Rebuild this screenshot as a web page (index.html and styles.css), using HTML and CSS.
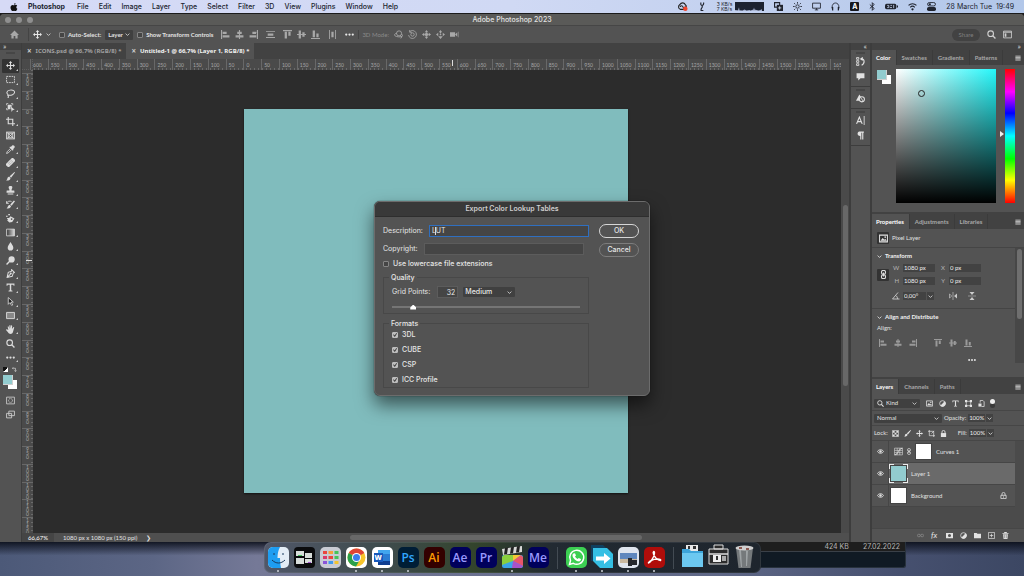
FILE: index.html
```html
<!DOCTYPE html>
<html lang="en">
<head>
    <meta charset="UTF-8">
    <meta name="viewport" content="width=device-width, initial-scale=1.0">
    <title>Adobe Photoshop 2023</title>
    <link rel="stylesheet" href="styles.css">
</head>
<body>
    <!-- Icon sprite -->
    <svg class="sprite" aria-hidden="true">
        <symbol id="apple" viewBox="0 0 16 16"><path fill="currentColor" d="M11 0c.1 1.800-1.400 3.400-3 3.400C7.800 1.700 9.400.2 11 0zM8.200 4.600c.8 0 1.700-.9 3.200-.9 1.200 0 2.200.6 2.900 1.600-2.600 1.500-2.200 5 .5 6C14 13.500 12.700 16 11 16c-1.200 0-1.600-.7-2.900-.7-1.400 0-1.800.7-2.900.7C3 16 1 12 1 9c0-3.300 2-5.200 4.200-5.200 1.300 0 2.300.8 3 .8z"/></symbol>
        <symbol id="chevron" viewBox="0 0 16 16"><path fill="none" stroke="currentColor" stroke-width="2.500" d="M2 5l6 6 6-6"/></symbol>
        <symbol id="home" viewBox="0 0 16 16"><path fill="currentColor" d="M8 1L0 9h2.500v6h4v-4.500h3V15h4V9H16z"/></symbol>
        <symbol id="move" viewBox="0 0 16 16"><path fill="currentColor" d="M8 0l3 3.500H9V7h3.500V5L16 8l-3.500 3V9H9v3.500h2L8 16l-3-3.500h2V9H3.500v2L0 8l3.500-3v2H7V3.500H5z"/></symbol>
        <symbol id="al-left" viewBox="0 0 16 16"><path fill="currentColor" d="M0 0h2v16H0zM3 3h7v4H3zM3 9.500h12v4H3z"/></symbol>
        <symbol id="al-hc" viewBox="0 0 16 16"><path fill="currentColor" d="M7 0h2v3h3v4H9v2.500h6v4H9V16H7v-2.500H1v-4h6V7H4V3h3z"/></symbol>
        <symbol id="al-right" viewBox="0 0 16 16"><path fill="currentColor" d="M14 0h2v16h-2zM6 3h7v4H6zM1 9.500h12v4H1z"/></symbol>
        <symbol id="al-top" viewBox="0 0 16 16"><path fill="currentColor" d="M0 0h16v2H0zM3 3h4v12H3zM9.500 3h4v7h-4z"/></symbol>
        <symbol id="al-vc" viewBox="0 0 16 16"><path fill="currentColor" d="M0 7h3V1h4v6h2.500V4h4v3H16v2h-2.500v3h-4V9H7v6H3V9H0z"/></symbol>
        <symbol id="al-bottom" viewBox="0 0 16 16"><path fill="currentColor" d="M0 14h16v2H0zM3 1h4v12H3zM9.500 6h4v7h-4z"/></symbol>
        <symbol id="dist-v" viewBox="0 0 16 16"><path fill="currentColor" d="M0 2h16v1.500H0zM3 6h10v4H3zM0 12.500h16V14H0z"/></symbol>
        <symbol id="dist-h" viewBox="0 0 16 16"><path fill="currentColor" d="M2 0h1.500v16H2zM6 3h4v10H6zM12.500 0H14v16h-1.500z"/></symbol>
        <symbol id="dots" viewBox="0 0 16 16"><g fill="currentColor"><circle cx="2.200" cy="8" r="2"/><circle cx="8" cy="8" r="2"/><circle cx="13.800" cy="8" r="2"/></g></symbol>
        <symbol id="orbit" viewBox="0 0 16 16"><g fill="none" stroke="currentColor" stroke-width="1.500"><circle cx="9" cy="6" r="4.500"/><path d="M5 6C1 6 0 9 2 10.500s9 2.500 12 1 1-4-1-4M11 10l3 2-2 3"/></g></symbol>
        <symbol id="roll" viewBox="0 0 16 16"><g fill="none" stroke="currentColor" stroke-width="1.500"><circle cx="8" cy="8" r="3"/><path d="M3 3a7 7 0 1 1-2 6M3 0v4h4"/></g></symbol>
        <symbol id="pan" viewBox="0 0 16 16"><path fill="currentColor" d="M8 0l3 4H5zM8 16l3-4H5zM0 8l4-3v6zM16 8l-4-3v6zM8 4l4 4-4 4-4-4z"/></symbol>
        <symbol id="slide" viewBox="0 0 16 16"><path fill="currentColor" d="M8 0l3 4H9v2H7V4H5zM8 16l4-5H4zM0 8l4-3v6zM16 8l-4-3v6z"/><circle cx="8" cy="8" r="1.500" fill="currentColor"/></symbol>
        <symbol id="camera" viewBox="0 0 16 16"><path fill="currentColor" d="M0 4h9v8H0zM9 8l4-4v8z"/><path stroke="currentColor" d="M15.500 3v10"/></symbol>
        <symbol id="search" viewBox="0 0 16 16"><circle cx="6.500" cy="6.500" r="5" fill="none" stroke="currentColor" stroke-width="2"/><path stroke="currentColor" stroke-width="2.500" d="M10 10l5 5"/></symbol>
        <symbol id="layout" viewBox="0 0 16 16"><path fill="none" stroke="currentColor" stroke-width="1.500" d="M1 2h14v12H1zM1 4h14"/><path fill="currentColor" d="M3 6h3v6H3z"/></symbol>
        <symbol id="burger" viewBox="0 0 16 16"><path stroke="currentColor" stroke-width="2" d="M1 3h14M1 6.500h14M1 10h14M1 13.500h14"/></symbol>
        <symbol id="marquee" viewBox="0 0 16 16"><path fill="none" stroke="currentColor" stroke-width="1.600" stroke-dasharray="3 1.500" d="M1 2.500h14v11H1z"/></symbol>
        <symbol id="lasso" viewBox="0 0 16 16"><path fill="none" stroke="currentColor" stroke-width="1.800" d="M4 10C0 8 1 3 7 2s9 2 8 5-7 5-10 4-2 0-1 2 0 2-1 3"/></symbol>
        <symbol id="objsel" viewBox="0 0 16 16"><path fill="none" stroke="currentColor" stroke-width="1.300" d="M1 4V1h3m5 0h3v3M1 9v3h3"/><path fill="currentColor" d="M3 3h7v4l-2-1v5H3zM8.500 6l7 6-3.500.5L10 16z"/></symbol>
        <symbol id="crop" viewBox="0 0 16 16"><path fill="none" stroke="currentColor" stroke-width="2" d="M4 0v12h12M0 4h12v12"/></symbol>
        <symbol id="frame" viewBox="0 0 16 16"><path fill="none" stroke="currentColor" stroke-width="1.600" d="M1 2h14v12H1zM1 2l14 12M15 2L1 14M4 4h8v8H4z"/></symbol>
        <symbol id="eyedrop" viewBox="0 0 16 16"><path fill="currentColor" d="M11 1c2-2 6 1 4 4l-2.500 2.500 1 1-1.500 1.500-6-6L7.500 2.500l1 1z"/><path fill="none" stroke="currentColor" stroke-width="1.500" d="M8 6l-6 6-1 3 3-1 6-6"/></symbol>
        <symbol id="heal" viewBox="0 0 16 16"><g transform="rotate(-45 8 8)"><rect x="-1" y="4" width="18" height="8" rx="3" fill="currentColor"/><path stroke="#535353" stroke-dasharray="1 1" d="M4.500 4v8M11.500 4v8M6 6.500h4M6 9.500h4"/></g></symbol>
        <symbol id="brush" viewBox="0 0 16 16"><path fill="currentColor" d="M15 0l1 1-7 9-2.500-2.500zM6 8.500L8 10.500c0 4-4 5-8 4.500 2-1 2-2 2.500-4S5 8.500 6 8.500z"/></symbol>
        <symbol id="stamp" viewBox="0 0 16 16"><path fill="currentColor" d="M8 0c4 0 4 3 2 6v2h4c1 0 1 1 1 4H1c0-3 0-4 1-4h4V6C4 3 4 0 8 0zM3 13.500h10V15H3z"/></symbol>
        <symbol id="history" viewBox="0 0 16 16"><path fill="currentColor" d="M14 1l2 1-6 8-2.500-2zM7 9l2 2c-1 4-5 4-8 4 3-2 2-6 6-6z"/><path fill="none" stroke="currentColor" stroke-width="1.500" d="M1 2v4h4M1 6c1-4 6-5 9-3"/></symbol>
        <symbol id="eraser" viewBox="0 0 16 16"><path fill="currentColor" d="M8 4l7 4-4 6-5 1-4-4zM0 3h3v2H0zM4 0h3v2H4zM2 7h3v2H2z"/><circle cx="10" cy="9" r="1.500" fill="#535353"/></symbol>
        <symbol id="gradient" viewBox="0 0 16 16"><defs><linearGradient id="gr"><stop stop-color="#333"/><stop offset="1" stop-color="#ddd"/></linearGradient></defs><path fill="url(#gr)" stroke="currentColor" stroke-width="1.400" d="M1 2h14v12H1z"/></symbol>
        <symbol id="drop" viewBox="0 0 16 16"><path fill="currentColor" d="M8 0c2 4 5 7 5 10a5 5 0 0 1-10 0c0-3 3-6 5-10z"/></symbol>
        <symbol id="dodge" viewBox="0 0 16 16"><circle cx="10" cy="6" r="5.500" fill="currentColor"/><path stroke="currentColor" stroke-width="2.500" d="M7 9l-6 6"/></symbol>
        <symbol id="pen" viewBox="0 0 16 16"><path fill="none" stroke="currentColor" stroke-width="1.800" d="M10 1l5 5-2 1-2 6-9 2 2-9 6-2zM2 15l6-6"/><circle cx="8.500" cy="8" r="1.800" fill="currentColor"/></symbol>
        <symbol id="type" viewBox="0 0 16 16"><path fill="currentColor" d="M1 1h14v4h-1.500L13 3H9.300v10l2.200.8V15h-7v-1.200l2.200-.8V3H3l-.5 2H1z"/></symbol>
        <symbol id="arrow" viewBox="0 0 16 16"><path fill="#222" stroke="currentColor" stroke-width="1.500" d="M4 1v12l3-3 3 5 2-1-3-5h4z"/></symbol>
        <symbol id="rect" viewBox="0 0 16 16"><path fill="#888" stroke="currentColor" stroke-width="1.600" d="M1 2.500h14v11H1z"/></symbol>
        <symbol id="hand" viewBox="0 0 16 16"><path fill="currentColor" d="M4 8L3 3.500c0-1.500 1.500-1.500 2 0L6 7V1.500c0-2 2-2 2 0V6l1-4.500c.5-1.500 2-1 2 .5L10.500 7 13 4c1-1 2 0 1.500 1L12.500 12c-1 5-7 5-9 1L0 9c0-2 2-2 4 0z"/></symbol>
        <symbol id="swap" viewBox="0 0 16 16"><path fill="none" stroke="currentColor" stroke-width="2" d="M4 1L1 4l3 3M2 4h9v9M8 11l3 4 4-4"/></symbol>
        <symbol id="mask" viewBox="0 0 16 16"><path fill="none" stroke="currentColor" stroke-width="1.500" d="M1 2h14v12H1z"/><circle cx="8" cy="8" r="3.500" fill="none" stroke="currentColor" stroke-width="1.500" stroke-dasharray="2 1"/></symbol>
        <symbol id="screens" viewBox="0 0 16 16"><path fill="#535353" stroke="currentColor" stroke-width="1.600" d="M5 2h10v8H5zM1 6h9v8H1z"/></symbol>
        <symbol id="hist2" viewBox="0 0 16 16"><path fill="none" stroke="currentColor" stroke-width="1.500" d="M1 1h4v3H1zM1 6.500h4v3H1zM1 12h4v3H1z"/><path fill="none" stroke="currentColor" stroke-width="2" d="M12 1L8.500 3.500 12 6M9 3.500c7-1 7 8 1 11"/></symbol>
        <symbol id="bubble" viewBox="0 0 16 16"><path fill="currentColor" d="M1 2h14v9H8l-4 4v-4H1z"/></symbol>
        <symbol id="shapes" viewBox="0 0 16 16"><path fill="currentColor" d="M6 1l4 6-2 5H0z"/><circle cx="10.500" cy="9.500" r="4.500" fill="#535353" stroke="currentColor" stroke-width="1.800"/><path fill="none" stroke="currentColor" stroke-width="1.500" d="M8 6l5 7"/></symbol>
        <symbol id="char" viewBox="0 0 16 16"><path fill="none" stroke="currentColor" stroke-width="2" d="M1 14L6 2l5 12M3 10h6"/><path stroke="currentColor" stroke-width="1.500" d="M14.500 0v16"/></symbol>
        <symbol id="para" viewBox="0 0 16 16"><path fill="currentColor" d="M6 1h8v2h-1v12h-2V3H9.500v12h-2V9C1 9 2 1 6 1z"/></symbol>
        <symbol id="picture" viewBox="0 0 16 16"><path fill="none" stroke="currentColor" stroke-width="1.800" d="M1 2h14v12H1z"/><path fill="currentColor" d="M2.500 12l4-5 3 3 1.500-1.500 3 3.500z"/><circle cx="11" cy="5.500" r="1.500" fill="currentColor"/></symbol>
        <symbol id="chain" viewBox="3 0 10 16"><g fill="none" stroke="currentColor" stroke-width="2"><rect x="4.500" y="0.800" width="7" height="6.500" rx="2.500"/><rect x="4.500" y="8.700" width="7" height="6.500" rx="2.500"/><path d="M8 4.500v7"/></g></symbol>
        <symbol id="angle" viewBox="0 0 16 16"><path fill="none" stroke="currentColor" stroke-width="1.800" d="M12 1L1 14h14M7 7c3 1 4 4 4 7"/></symbol>
        <symbol id="flip-h" viewBox="0 0 16 16"><path fill="currentColor" d="M7.400 0h1.200v16H7.400zM16 3v10l-6-5z"/><path fill="none" stroke="currentColor" stroke-width="1.300" d="M1 4v8l4.500-4z"/></symbol>
        <symbol id="flip-v" viewBox="0 0 16 16"><path fill="currentColor" d="M0 7.400h16v1.200H0zM3 0h10L8 6zM3 16h10l-5-6z"/></symbol>
        <symbol id="adjust" viewBox="0 0 16 16"><circle cx="8" cy="8" r="6.500" fill="none" stroke="currentColor" stroke-width="1.800"/><path fill="currentColor" d="M13 3A7 7 0 0 1 3 13z"/></symbol>
        <symbol id="shape" viewBox="0 0 16 16"><path fill="none" stroke="currentColor" stroke-width="1.500" d="M3 3h10v10H3z"/><path fill="currentColor" d="M0 0h5v5H0zM11 0h5v5h-5zM0 11h5v5H0zM11 11h5v5h-5z"/></symbol>
        <symbol id="smart" viewBox="0 0 16 16"><path fill="none" stroke="currentColor" stroke-width="1.800" d="M5 6V1h6l3 3v11H8"/><path fill="currentColor" d="M1 8h7v7H1z"/></symbol>
        <symbol id="checker" viewBox="0 0 16 16"><path fill="none" stroke="currentColor" stroke-width="1.500" d="M1 1h14v14H1z"/><path fill="currentColor" d="M2 2h4v4H2zM10 2h4v4h-4zM6 6h4v4H6zM2 10h4v4H2zM10 10h4v4h-4z"/></symbol>
        <symbol id="artboard" viewBox="0 0 16 16"><path fill="none" stroke="currentColor" stroke-width="1.600" d="M3 0v13h13M0 3h13v13M8 8l6-6"/></symbol>
        <symbol id="lock" viewBox="0 0 16 16"><path fill="none" stroke="currentColor" stroke-width="2" d="M4.500 8V4.500a3.500 3.500 0 0 1 7 0V8"/><path fill="currentColor" d="M2 7h12v9H2z"/></symbol>
        <symbol id="lock-o" viewBox="0 0 16 16"><path fill="none" stroke="currentColor" stroke-width="1.800" d="M4.500 8V4.500a3.500 3.500 0 0 1 7 0V8M2 7.500h12v7.500H2zM8 10v3"/></symbol>
        <symbol id="eye" viewBox="0 0 16 16"><path fill="none" stroke="currentColor" stroke-width="2" d="M1 8c3.500-5.500 10.500-5.500 14 0-3.500 5.500-10.500 5.500-14 0z"/><circle cx="8" cy="8" r="2.800" fill="currentColor"/></symbol>
        <symbol id="curves" viewBox="0 0 16 16"><path fill="none" stroke="currentColor" stroke-width="1" d="M1 2h14v12H1zM1 6h14M1 10h14M5.700 2v12M10.300 2v12"/><path fill="none" stroke="currentColor" stroke-width="1.500" d="M1 14C9 13 6 4 15 2"/></symbol>
        <symbol id="links" viewBox="0 0 16 16"><g fill="none" stroke="currentColor" stroke-width="1.800"><rect x="1" y="5" width="6.500" height="6" rx="3"/><rect x="8.500" y="5" width="6.500" height="6" rx="3"/></g></symbol>
        <symbol id="addmask" viewBox="0 0 16 16"><path fill="currentColor" fill-rule="evenodd" d="M0 2h16v12H0zM8 4.500a3.500 3.500 0 1 0 0 7 3.500 3.500 0 0 0 0-7z"/></symbol>
        <symbol id="folder" viewBox="0 0 16 16"><path fill="currentColor" d="M0 2h6l2 2h8v10H0z"/></symbol>
        <symbol id="plus" viewBox="0 0 16 16"><path fill="none" stroke="currentColor" stroke-width="1.600" d="M1 1h14v14H1zM8 4v8M4 8h8"/></symbol>
        <symbol id="trash" viewBox="0 0 16 16"><path fill="currentColor" d="M1 2h4V0h6v2h4v2H1zM2.500 5h11l-1 11h-9z"/><path stroke="#535353" d="M6 6v8M10 6v8"/></symbol>
        <symbol id="cloud" viewBox="0 0 18 16"><path fill="none" stroke="#222" stroke-width="2" d="M5 13a4.500 4.500 0 0 1-1-8c3-5 9-4 10 0 3 2 2 8-2 8zM5 9c0-3 4-3 5 0s4 3 4-1"/><circle cx="14" cy="12" r="4" fill="#f0462e"/></symbol>
        <symbol id="plug" viewBox="0 0 16 16"><path fill="none" stroke="currentColor" stroke-width="2" d="M5 1v3c0 3 5 2 5-1V1M7.500 5v4c0 2-2 2-2 4v2h4"/></symbol>
        <symbol id="copies" viewBox="0 0 16 16"><path fill="none" stroke="currentColor" stroke-width="2" d="M1 1h9v8H1z"/><path fill="currentColor" d="M5 5h11v11H5z"/><path stroke="#d5dff2" stroke-width="1.500" d="M7 10.500h6M10 7.500v6"/></symbol>
        <symbol id="sun" viewBox="0 0 16 16"><circle cx="8" cy="8" r="3" fill="none" stroke="currentColor" stroke-width="1.500"/><path stroke="currentColor" stroke-width="1.500" d="M8 0v3M8 13v3M0 8h3M13 8h3M2 2l2 2M12 12l2 2M14 2l-2 2M4 12l-2 2"/></symbol>
        <symbol id="display" viewBox="0 0 16 16"><path fill="none" stroke="currentColor" stroke-width="1.500" d="M1 2h14v9H1zM5 14h6M8 11v3"/></symbol>
        <symbol id="phones" viewBox="0 0 16 16"><path fill="none" stroke="currentColor" stroke-width="1.500" d="M2 10c-1-11 13-11 12 0"/><path fill="currentColor" d="M1 9h3v6H2zM15 9h-3v6h2z"/></symbol>
        <symbol id="bt" viewBox="2 0 11 16"><path fill="none" stroke="currentColor" stroke-width="1.700" d="M3.500 4.500l8 7L8 15V1l3.500 3.500-8 7"/></symbol>
        <symbol id="battery" viewBox="0 0 24 16"><rect x="0" y="3" width="21" height="10" rx="3" fill="currentColor"/><path fill="currentColor" d="M22 6h2v4h-2z"/><path stroke="#c3d0ec" stroke-width="1.500" fill="none" d="M4 6h3v4H4M10 6h3M9 10h4M16 5v6"/></symbol>
        <symbol id="wifi" viewBox="0 0 16 16"><path fill="none" stroke="currentColor" stroke-width="2" d="M1 6c4-4 10-4 14 0M4 9.500c2.500-2.500 5.500-2.500 8 0"/><circle cx="8" cy="13" r="2" fill="currentColor"/></symbol>
        <symbol id="switches" viewBox="0 0 16 16"><rect x="1" y="1" width="14" height="6" rx="3" fill="none" stroke="currentColor" stroke-width="1.600"/><circle cx="5" cy="4" r="2" fill="currentColor"/><rect x="0" y="9" width="16" height="7" rx="3" fill="currentColor"/></symbol>
    </svg>

    <header class="menubar">
        <nav class="menus">
            <svg class="icon apple"><use href="#apple"/></svg>
            <button class="app-name">Photoshop</button>
            <button>File</button>
            <button>Edit</button>
            <button>Image</button>
            <button>Layer</button>
            <button>Type</button>
            <button>Select</button>
            <button>Filter</button>
            <button>3D</button>
            <button>View</button>
            <button>Plugins</button>
            <button>Window</button>
            <button>Help</button>
        </nav>
        <div class="status-icons">
            <svg class="icon wide"><use href="#cloud"/></svg>
            <svg class="icon"><use href="#plug"/></svg>
            <div class="net">
                <div class="net-text"><span>3 KB/s</span><span>7 KB/s</span></div>
                <svg class="net-graph" viewBox="0 0 29 9" preserveAspectRatio="none"><path fill="#1c2230" d="M0 0h29v9H0z"/><path fill="#aab6d4" d="M0 9V8l3 .3 1-3 .5 3 3 .2 2-1 2 1 3-.5 1 .5 3-1 .5-2 .5 2 4 1 2-.5 1-1 .5 1.500V9z"/></svg>
            </div>
            <svg class="icon"><use href="#copies"/></svg>
            <svg class="icon"><use href="#sun"/></svg>
            <svg class="icon"><use href="#display"/></svg>
            <svg class="icon"><use href="#phones"/></svg>
            <span class="input-lang">A</span>
            <svg class="icon bluetooth"><use href="#bt"/></svg>
            <svg class="icon battery"><use href="#battery"/></svg>
            <svg class="icon"><use href="#wifi"/></svg>
            <svg class="icon"><use href="#switches"/></svg>
            <time>28 March Tue&nbsp; 19:49</time>
        </div>
    </header>

    <main class="app">
        <div class="titlebar">
            <div class="lights"><i></i><i></i><i></i></div>
            <h1>Adobe Photoshop 2023</h1>
        </div>

        <div class="options">
            <button class="home" aria-label="Home"><svg class="icon"><use href="#home"/></svg></button>
            <button class="tool-pick" aria-label="Move tool"><svg class="icon"><use href="#move"/></svg><svg class="chev"><use href="#chevron"/></svg></button>
            <label class="check"><input type="checkbox"> Auto-Select:</label>
            <div class="select auto-target">
                <select aria-label="Auto-select target"><option>Layer</option></select>
                <svg class="chev"><use href="#chevron"/></svg>
            </div>
            <label class="check transform-check"><input type="checkbox"> Show Transform Controls</label>
            <div class="icon-group">
                <svg class="icon"><use href="#al-left"/></svg>
                <svg class="icon"><use href="#al-hc"/></svg>
                <svg class="icon"><use href="#al-right"/></svg>
            </div>
            <div class="icon-group"><svg class="icon"><use href="#dist-v"/></svg></div>
            <div class="icon-group">
                <svg class="icon"><use href="#al-top"/></svg>
                <svg class="icon"><use href="#al-vc"/></svg>
                <svg class="icon"><use href="#al-bottom"/></svg>
            </div>
            <div class="icon-group"><svg class="icon"><use href="#dist-h"/></svg></div>
            <div class="icon-group more"><svg class="icon"><use href="#dots"/></svg></div>
            <div class="mode-3d">
                <span>3D Mode:</span>
                <svg class="icon"><use href="#orbit"/></svg>
                <svg class="icon"><use href="#roll"/></svg>
                <svg class="icon"><use href="#pan"/></svg>
                <svg class="icon"><use href="#slide"/></svg>
                <svg class="icon"><use href="#camera"/></svg>
            </div>
            <div class="options-end">
                <button class="share">Share</button>
                <svg class="icon"><use href="#search"/></svg>
                <svg class="icon"><use href="#layout"/></svg>
            </div>
        </div>

        <div class="workspace">
            <aside class="toolbar">
                <div class="collapse">»</div>
                <div class="grip"></div>
                <div class="tools">
                    <button class="active" aria-label="Move"><svg class="icon"><use href="#move"/></svg></button>
                    <button aria-label="Marquee"><svg class="icon"><use href="#marquee"/></svg></button>
                    <button aria-label="Lasso"><svg class="icon"><use href="#lasso"/></svg></button>
                    <button aria-label="Object selection"><svg class="icon"><use href="#objsel"/></svg></button>
                    <button aria-label="Crop"><svg class="icon"><use href="#crop"/></svg></button>
                    <button class="single" aria-label="Frame"><svg class="icon"><use href="#frame"/></svg></button>
                    <button aria-label="Eyedropper"><svg class="icon"><use href="#eyedrop"/></svg></button>
                    <button aria-label="Healing brush"><svg class="icon"><use href="#heal"/></svg></button>
                    <button aria-label="Brush"><svg class="icon"><use href="#brush"/></svg></button>
                    <button aria-label="Clone stamp"><svg class="icon"><use href="#stamp"/></svg></button>
                    <button aria-label="History brush"><svg class="icon"><use href="#history"/></svg></button>
                    <button aria-label="Eraser"><svg class="icon"><use href="#eraser"/></svg></button>
                    <button aria-label="Gradient"><svg class="icon"><use href="#gradient"/></svg></button>
                    <button aria-label="Blur"><svg class="icon"><use href="#drop"/></svg></button>
                    <button aria-label="Dodge"><svg class="icon"><use href="#dodge"/></svg></button>
                    <button aria-label="Pen"><svg class="icon"><use href="#pen"/></svg></button>
                    <button aria-label="Type"><svg class="icon"><use href="#type"/></svg></button>
                    <button aria-label="Path selection"><svg class="icon"><use href="#arrow"/></svg></button>
                    <button aria-label="Rectangle"><svg class="icon"><use href="#rect"/></svg></button>
                    <button aria-label="Hand"><svg class="icon"><use href="#hand"/></svg></button>
                    <button class="single" aria-label="Zoom"><svg class="icon"><use href="#search"/></svg></button>
                    <button aria-label="Edit toolbar"><svg class="icon"><use href="#dots"/></svg></button>
                </div>
                <div class="swatch-tools">
                    <span class="mini-swatches"></span>
                    <svg class="chev"><use href="#swap"/></svg>
                </div>
                <div class="swatches"></div>
                <div class="modes">
                    <svg class="icon"><use href="#mask"/></svg>
                    <svg class="icon"><use href="#screens"/></svg>
                </div>
            </aside>

            <section class="document">
                <div class="doc-tabs">
                    <button class="doc-tab"><span>×</span>ICONS.psd @ 66,7% (RGB/8) *</button>
                    <button class="doc-tab active"><span>×</span>Untitled-1 @ 66,7% (Layer 1, RGB/8) *</button>
                </div>
                <div class="doc-view">
                    <div class="ruler-corner"></div>
                    <div class="ruler-h"><div class="ticks" id="ruler-h"></div><i class="mark"></i></div>
                    <div class="ruler-end"></div>
                    <div class="ruler-v"><div class="ticks" id="ruler-v"></div><i class="mark"></i></div>
                    <div class="canvas"><div class="artboard"></div></div>
                    <div class="scroll-v"><i></i></div>
                </div>
                <div class="doc-status">
                    <span class="zoom">66,67%</span>
                    <span class="info">1080 px x 1080 px (150 ppi)</span>
                    <span class="next">❯</span>
                    <div class="scroll-h"><i></i></div>
                </div>
            </section>

            <aside class="strip">
                <div class="collapse">«</div>
                <div class="strip-group">
                    <div class="grip"></div>
                    <svg class="icon"><use href="#hist2"/></svg>
                    <svg class="icon"><use href="#bubble"/></svg>
                </div>
                <div class="strip-group">
                    <div class="grip"></div>
                    <svg class="icon"><use href="#shapes"/></svg>
                </div>
                <div class="strip-group">
                    <div class="grip"></div>
                    <svg class="icon"><use href="#char"/></svg>
                    <svg class="icon"><use href="#para"/></svg>
                </div>
                <div class="strip-rest"></div>
            </aside>

            <aside class="panels">
                <div class="collapse">»</div>

                <section class="panel color-panel">
                    <div class="panel-tabs">
                        <button class="active">Color</button>
                        <button>Swatches</button>
                        <button>Gradients</button>
                        <button>Patterns</button>
                        <svg class="burger"><use href="#burger"/></svg>
                    </div>
                    <div class="color-body">
                        <div class="swatches"></div>
                        <div class="spectrum"><i></i></div>
                        <div class="hue"><i></i></div>
                    </div>
                </section>

                <section class="panel props-panel">
                    <div class="panel-tabs">
                        <button class="active">Properties</button>
                        <button>Adjustments</button>
                        <button>Libraries</button>
                        <svg class="burger"><use href="#burger"/></svg>
                    </div>
                    <div class="layer-kind"><span class="dark-box"><svg class="icon"><use href="#picture"/></svg></span>Pixel Layer</div>
                    <div class="props-scroll">
                        <div class="props-main">
                            <div class="props-section">
                                <h2><svg class="chev"><use href="#chevron"/></svg>Transform</h2>
                                <div class="transform-grid">
                                    <span class="dark-box link"><svg class="icon"><use href="#chain"/></svg></span>
                                    <label for="w">W</label><input type="text" id="w" value="1080 px">
                                    <label for="x">X</label><input type="text" id="x" value="0 px">
                                    <label for="h">H</label><input type="text" id="h" value="1080 px">
                                    <label for="y">Y</label><input type="text" id="y" value="0 px">
                                </div>
                                <div class="angle-row">
                                    <label for="angle-in"><svg class="icon"><use href="#angle"/></svg></label>
                                    <div class="combo"><input type="text" id="angle-in" value="0,00°"><button aria-label="Angle presets"><svg class="chev"><use href="#chevron"/></svg></button></div>
                                    <svg class="icon"><use href="#flip-h"/></svg>
                                    <svg class="icon"><use href="#flip-v"/></svg>
                                </div>
                            </div>
                            <div class="props-section align">
                                <h2><svg class="chev"><use href="#chevron"/></svg>Align and Distribute</h2>
                                <p>Align:</p>
                                <div class="align-icons">
                                    <svg class="icon"><use href="#al-left"/></svg>
                                    <svg class="icon"><use href="#al-hc"/></svg>
                                    <svg class="icon"><use href="#al-right"/></svg>
                                    <svg class="icon gap"><use href="#al-top"/></svg>
                                    <svg class="icon"><use href="#al-vc"/></svg>
                                    <svg class="icon"><use href="#al-bottom"/></svg>
                                </div>
                                <svg class="icon align-more"><use href="#dots"/></svg>
                            </div>
                        </div>
                        <div class="props-bar"><i></i></div>
                    </div>
                </section>

                <section class="panel layers-panel">
                    <div class="panel-tabs">
                        <button class="active">Layers</button>
                        <button>Channels</button>
                        <button>Paths</button>
                        <svg class="burger"><use href="#burger"/></svg>
                    </div>
                    <div class="layer-row filter-row">
                        <div class="select kind">
                            <svg class="icon"><use href="#search"/></svg>
                            <select aria-label="Filter"><option>Kind</option></select>
                            <svg class="chev"><use href="#chevron"/></svg>
                        </div>
                        <div class="filter-icons">
                            <svg class="icon"><use href="#picture"/></svg>
                            <svg class="icon"><use href="#adjust"/></svg>
                            <svg class="icon"><use href="#type"/></svg>
                            <svg class="icon"><use href="#shape"/></svg>
                            <svg class="icon"><use href="#smart"/></svg>
                        </div>
                        <span class="toggle"></span>
                    </div>
                    <div class="layer-row">
                        <div class="select blend">
                            <select aria-label="Blend mode"><option>Normal</option></select>
                            <svg class="chev"><use href="#chevron"/></svg>
                        </div>
                        <label for="opacity">Opacity:</label>
                        <div class="combo"><input type="text" id="opacity" value="100%"><button aria-label="Opacity slider"><svg class="chev"><use href="#chevron"/></svg></button></div>
                    </div>
                    <div class="layer-row">
                        <span>Lock:</span>
                        <div class="lock-icons">
                            <svg class="icon"><use href="#checker"/></svg>
                            <svg class="icon"><use href="#brush"/></svg>
                            <svg class="icon"><use href="#move"/></svg>
                            <svg class="icon"><use href="#artboard"/></svg>
                            <svg class="icon"><use href="#lock"/></svg>
                        </div>
                        <label for="fill">Fill:</label>
                        <div class="combo"><input type="text" id="fill" value="100%"><button aria-label="Fill slider"><svg class="chev"><use href="#chevron"/></svg></button></div>
                    </div>
                    <div class="layer-area">
                        <ul class="layer-list">
                            <li>
                                <span class="eye"><svg class="icon"><use href="#eye"/></svg></span>
                                <svg class="icon adj"><use href="#curves"/></svg>
                                <svg class="icon linked"><use href="#chain"/></svg>
                                <span class="thumb"></span>Curves 1
                            </li>
                            <li class="selected">
                                <span class="eye"><svg class="icon"><use href="#eye"/></svg></span>
                                <span class="thumb teal"></span>Layer 1
                            </li>
                            <li>
                                <span class="eye"><svg class="icon"><use href="#eye"/></svg></span>
                                <span class="thumb"></span>Background
                                <svg class="icon locked"><use href="#lock-o"/></svg>
                            </li>
                        </ul>
                    </div>
                    <div class="layer-actions">
                        <svg class="icon off"><use href="#links"/></svg>
                        <span class="fx">fx</span>
                        <svg class="icon"><use href="#addmask"/></svg>
                        <svg class="icon"><use href="#adjust"/></svg>
                        <svg class="icon"><use href="#folder"/></svg>
                        <svg class="icon"><use href="#plus"/></svg>
                        <svg class="icon"><use href="#trash"/></svg>
                    </div>
                </section>
            </aside>
        </div>
    </main>

    <footer class="desktop">
        <div class="back-window">
            <div class="file-row"><span>424 KB</span><span>27.02.2022</span></div>
        </div>
        <nav class="dock">
            <a class="tile running" href="#" aria-label="Finder"><svg viewBox="0 0 21 21"><rect width="21" height="21" rx="5" fill="#e4edf6"/><path fill="#1e9df1" d="M5 0h7c-2 4-2.500 7-2.500 11H12c0 4 .5 7 1 10H5a5 5 0 0 1-5-5V5a5 5 0 0 1 5-5z"/><path fill="none" stroke="#18385c" d="M6 6v2M15 6v2M4 13c4 4 9 4 13 0"/></svg></a>
            <a class="tile" href="#" aria-label="Mission Control"><svg viewBox="0 0 21 21"><rect width="21" height="21" rx="4" fill="#0b0c0e"/><path fill="#d8dedb" d="M2 4h8v5H2zM11 6h7v5h-7zM2 11h8v6H2zM11 12h7v4h-7z"/><path fill="#3fc35a" d="M4 8h4v1H4z"/><path fill="#a44fd0" d="M14 15h3v1h-3z"/></svg></a>
            <a class="tile" href="#" aria-label="Launchpad"><svg viewBox="0 0 21 21"><rect width="21" height="21" rx="5" fill="#c9ccd4"/><path fill="#e9473f" d="M3 4h4v3H3zM8.500 9H13v3H8.500z"/><path fill="#f6a13a" d="M8.500 4H13v3H8.500z"/><path fill="#46c35c" d="M14.500 4h4v3h-4zM14.500 9h4v3h-4z"/><path fill="#d93a6a" d="M3 9h4v3H3z"/><path fill="#8a55d8" d="M3 14h4v3H3z"/><path fill="#3f9af0" d="M8.500 14H13v3H8.500z"/><path fill="#f2c530" d="M14.500 14h4v3h-4z"/></svg></a>
            <a class="tile running" href="#" aria-label="Chrome"><svg viewBox="0 0 21 21"><rect width="21" height="21" rx="5" fill="#fff"/><circle cx="10.500" cy="10.500" r="9" fill="#f7c52c"/><path fill="#de4436" d="M10.500 10.500L2.700 6a9 9 0 0 1 15.600 0z"/><path fill="#2ba14b" d="M10.500 10.500L2.700 6a9 9 0 0 0 7.300 13.500l4-7z"/><circle cx="10.500" cy="10.500" r="4.500" fill="#fff"/><circle cx="10.500" cy="10.500" r="3.500" fill="#3b7ded"/></svg></a>
            <a class="tile running word" href="#" aria-label="Word"><svg viewBox="0 0 21 21"><rect width="21" height="21" rx="5" fill="#fff"/><path fill="#2b7cd3" d="M6 3h12v15H6z"/><path fill="#41a5ee" d="M6 3h12v4H6z"/><path fill="#103f91" d="M6 14h12v4H6z"/><path fill="#185abd" d="M2 6h9v9H2z"/></svg><b>W</b></a>
            <a class="tile running ps" href="#">Ps</a>
            <a class="tile ai" href="#">Ai</a>
            <a class="tile ae" href="#">Ae</a>
            <a class="tile pr" href="#">Pr</a>
            <a class="tile running" href="#" aria-label="Final Cut Pro"><svg viewBox="0 0 21 21"><path fill="#d8d8d8" d="M0 2l20-3v6L1 8z"/><path fill="#222" d="M3 1l3-.5L5 7l-3 .4zM9 .200l3-.5-1 6.500-3 .5zM15-.700l3-.4-1 6.300-3 .4z"/><rect y="8" width="21" height="13" rx="2" fill="#3aa6e8"/><path fill="#8bd03e" d="M2 8h9v6L0 18v-8z"/><path fill="#f5c632" d="M11 8h8l-8 6z"/><path fill="#e8566a" d="M19 8l2 2v9l-10-5z"/><path fill="#a952c9" d="M11 14l10 5-2 2h-9z"/></svg></a>
            <a class="tile me" href="#">Me</a>
            <i class="divider"></i>
            <a class="tile running" href="#" aria-label="WhatsApp"><svg viewBox="0 0 21 21"><rect width="21" height="21" rx="5" fill="#3ccf52"/><path fill="none" stroke="#fff" stroke-width="1.500" d="M3.500 17.500l1-4a7 7 0 1 1 2.800 2.900z"/><path fill="#fff" d="M7.500 6.500l1.500-.3 1 2.300-1 1c.6 1.200 1.500 2 2.700 2.600l1-1.100 2.300 1c0 2-1.500 2.700-3 2.300C9 13.500 6.500 10.500 6.500 8.500c0-1 .4-1.600 1-2z"/></svg></a>
            <a class="tile running" href="#" aria-label="Splashtop"><svg viewBox="0 0 21 21"><path fill="#103f5e" d="M-1-2h12l3 3v13H-1z"/><path fill="#35bfe4" d="M1 1h14l6 6v14H8l-7-7z"/><path fill="#fff" d="M4 9.500h8V6l6.500 5.500L12 17v-3.500H4z"/></svg></a>
            <a class="tile running" href="#" aria-label="Preview"><svg viewBox="0 0 21 21"><rect width="21" height="21" rx="5" fill="#dfe5ee"/><path fill="#5f87bd" d="M2 6h17v6H2z"/><path fill="#c9b9a0" d="M2 12h17v4H2z"/><path fill="#25282d" d="M10 11h4v8h-4zM14 13h5v5h-5z"/></svg></a>
            <a class="tile running" href="#" aria-label="Acrobat"><svg viewBox="0 0 21 21"><rect width="21" height="21" rx="5" fill="#b00d0a"/><path fill="none" stroke="#fff" stroke-width="1.400" d="M4.500 16c2-.2 6-6.500 6-10 0-2.500-2-1.500-1 1 1 3 4 6.500 7 6.500 1.500-2-6-2-9 0-2 1-3.500 2-3 2.500z"/></svg></a>
            <i class="divider"></i>
            <a class="tile" href="#" aria-label="Downloads"><svg viewBox="0 0 21 21"><path fill="#e8e8e8" d="M4-2h12v6H4z"/><path fill="#333" d="M6-1h2v3H6zM11-1h3v3h-3z"/><path fill="#3ca4da" d="M0 2h7l2 2h12v16H0z"/><path fill="#6cc8f0" d="M0 6h21v14H0z"/></svg></a>
            <a class="tile" href="#" aria-label="Stack"><svg viewBox="0 0 21 21"><path fill="#2c2c2c" stroke="#ddd" d="M6-2h9v4H6zM1 2h19v5H1zM1 7h19v10H1z"/><path fill="#eee" d="M5 8h8v7H5z"/><path fill="#333" d="M8 9h2v4H8z"/><path fill="#aaa" d="M14 9h4v5h-4z"/></svg></a>
            <a class="tile" href="#" aria-label="Trash"><svg viewBox="0 0 21 21"><path fill="#75797b" d="M2 1h17l-2.500 20h-12z"/><path fill="#9ea3a5" d="M7 3l1 17h-1L5 3zM12 4h2l-1 15h-1z"/><ellipse cx="10.500" cy="1" rx="9" ry="2.500" fill="#cfcfcf"/><path fill="#8a5850" d="M5 0h3v2H5zM12 1h3v2h-3z"/></svg></a>
        </nav>
    </footer>

    <form class="dialog">
        <h2 class="dialog-title">Export Color Lookup Tables</h2>
        <div class="dialog-body">
            <div class="dialog-main">
                <div class="row focus-row">
                    <label for="desc">Description:</label>
                    <div class="caret-field"><input type="text" id="desc" value="LUT"><i class="caret"></i></div>
                </div>
                <div class="row copy-row">
                    <label for="copy">Copyright:</label>
                    <input type="text" id="copy">
                </div>
                <label class="check"><input type="checkbox"> Use lowercase file extensions</label>
                <fieldset class="quality">
                    <legend>Quality</legend>
                    <div class="row">
                        <label for="grid">Grid Points:</label>
                        <input type="text" id="grid" value="32">
                        <div class="select">
                            <select aria-label="Quality preset"><option>Medium</option></select>
                            <svg class="chev"><use href="#chevron"/></svg>
                        </div>
                    </div>
                    <input type="range" aria-label="Grid points" min="7" max="256" value="32">
                </fieldset>
                <fieldset class="formats">
                    <legend>Formats</legend>
                    <label class="check"><input type="checkbox" checked> 3DL</label>
                    <label class="check"><input type="checkbox" checked> CUBE</label>
                    <label class="check"><input type="checkbox" checked> CSP</label>
                    <label class="check"><input type="checkbox" checked> ICC Profile</label>
                </fieldset>
            </div>
            <div class="dialog-buttons">
                <button type="button" class="ok">OK</button>
                <button type="button">Cancel</button>
            </div>
        </div>
    </form>

    <script>
        // Fill a ruler with one tick every 50 px
        function buildRuler(id, from, to) {
            const ruler = document.getElementById(id);
            for (let n = from; n <= to; n += 50) {
                const tick = document.createElement('span');
                tick.textContent = Math.abs(n);
                ruler.appendChild(tick);
            }
        }

        buildRuler('ruler-h', -600, 1650);
        buildRuler('ruler-v', -100, 1150);
    </script>
</body>
</html>
```

FILE: styles.css
```css
* {
    box-sizing: border-box;
}

body {
    margin: 0;
    height: 100vh;
    display: flex;
    flex-direction: column;
    overflow: hidden;
    position: relative;
    font-family: Lato, "Open Sans", sans-serif;
    font-size: 6px;
    line-height: 8px;
    color: #e2e2e2;
    background: #1b1b1b;
}

button,
input,
select {
    font: inherit;
    color: inherit;
    background: none;
    border: none;
    border-radius: 0;
    margin: 0;
    padding: 0;
    outline: none;
    appearance: none;
}

h1,
h2,
p,
ul {
    margin: 0;
    padding: 0;
    font-size: inherit;
    list-style: none;
}

.sprite {
    position: absolute;
    width: 0;
    height: 0;
}

.icon {
    width: 9px;
    height: 9px;
    flex: none;
    display: block;
    overflow: visible;
}

.chev {
    width: 5px;
    height: 5px;
    flex: none;
    display: block;
}

/* Menu bar */
.menubar {
    height: 13px;
    flex: none;
    display: flex;
    justify-content: space-between;
    align-items: center;
    padding: 0 10px;
    font-family: Inter, sans-serif;
    font-size: 7px;
    color: #20242e;
    background: linear-gradient(to right, #d6daf6, #d0d9f4 50%, #b2c7e9);
}

.menus {
    display: flex;
    align-items: center;
    gap: 10px;
    font-weight: 500;
}

.menus .apple {
    width: 8px;
    height: 8px;
    color: #111;
}

.app-name {
    margin-right: 2px;
    font-weight: 700;
}

.status-icons {
    display: flex;
    align-items: center;
    gap: 10px;
}

.status-icons .wide {
    width: 11px;
}

.status-icons .bluetooth {
    width: 6px;
}

.status-icons .battery {
    width: 13px;
}

.net {
    display: flex;
    align-items: center;
    gap: 3px;
}

.net-text {
    display: flex;
    flex-direction: column;
    font-size: 5px;
    line-height: 5px;
}

.net-graph {
    width: 29px;
    height: 9px;
}

.input-lang {
    width: 9px;
    height: 9px;
    line-height: 9px;
    text-align: center;
    font-weight: 700;
    color: #fff;
    background: #16181f;
    border-radius: 1px;
}

/* Application window */
.app {
    flex: 1;
    min-height: 0;
    display: flex;
    flex-direction: column;
    margin-top: 1px;
    background: #535353;
    border-radius: 4px 4px 0 0;
}

.titlebar {
    height: 12px;
    flex: none;
    display: grid;
    grid-template-columns: 1fr auto 1fr;
    align-items: center;
    padding: 0 5px;
    background: #5a5a58;
    border-radius: 4px 4px 0 0;
    border-bottom: 1px solid #464646;
}

.titlebar h1 {
    font-family: Inter, sans-serif;
    font-size: 7px;
    font-weight: 500;
}

.lights {
    display: flex;
    gap: 5px;
}

.lights i {
    width: 6px;
    height: 6px;
    border-radius: 50%;
    background: #8f8f8f;
}

.options {
    height: 17px;
    flex: none;
    display: flex;
    align-items: center;
    padding: 0 12px 0 10px;
    font-weight: 700;
    background: #535353;
}

.options .icon {
    color: #a8a8a8;
}

.home {
    width: 19px;
    height: 13px;
    display: flex;
    align-items: center;
    border-right: 1px solid #444;
}

.tool-pick {
    display: flex;
    align-items: center;
    gap: 4px;
    padding: 0 8px 0 4px;
}

.options .tool-pick .icon,
.options .more .icon {
    color: #e6e6e6;
}

.check {
    display: flex;
    align-items: center;
    gap: 4px;
}

.options .check {
    gap: 3px;
}

.check input {
    width: 6px;
    height: 6px;
    flex: none;
    border: 1px solid #858585;
    border-radius: 1px;
    background: #454545;
}

.check input:checked {
    position: relative;
    border-color: #bdbdbd;
    background: #bdbdbd;
}

.check input:checked::before {
    content: "";
    position: absolute;
    inset: 0;
    background: #333;
    clip-path: polygon(0 45%, 20% 35%, 42% 60%, 85% 0, 100% 15%, 45% 100%);
}

.select {
    display: flex;
    align-items: center;
    height: 10px;
    padding: 0 3px;
    background: #404040;
    border-radius: 1px;
}

.select select {
    flex: 1;
    min-width: 0;
    height: 10px;
    line-height: 10px;
}

.auto-target {
    width: 28px;
    margin: 0 4px;
}

.icon-group {
    display: flex;
    gap: 5px;
    margin-left: 8px;
}

.mode-3d {
    display: flex;
    align-items: center;
    gap: 5px;
    margin-left: 4px;
    padding-left: 3px;
    border-left: 1px solid #444;
    font-weight: 400;
    color: #8a8a8a;
}

.options-end {
    display: flex;
    align-items: center;
    gap: 7px;
    margin-left: auto;
}

.options .options-end .icon {
    color: #d0d0d0;
}

.share {
    width: 28px;
    height: 12px;
    border-radius: 6px;
    font-weight: 400;
    color: #808080;
    background: #424242;
}

.workspace {
    flex: 1;
    min-height: 0;
    display: flex;
    gap: 2px;
    background: #3d3d3d;
}

.collapse {
    height: 7px;
    flex: none;
    padding: 0 3px;
    font-size: 8px;
    line-height: 6px;
    text-align: right;
    color: #ddd;
    background: #424242;
}

.grip {
    height: 2px;
    width: 9px;
    margin: 2px auto 3px;
    background: #464646;
}

/* Tools */
.toolbar {
    width: 21px;
    flex: none;
    background: #535353;
}

.toolbar .collapse {
    text-align: left;
}

.tools {
    height: 305px;
    margin-top: 5px;
    display: grid;
    grid-auto-rows: 1fr;
}

.toolbar .grip {
    margin-bottom: 0;
}

.tools button {
    display: flex;
    align-items: center;
    justify-content: center;
    position: relative;
    margin: 0 2px;
    color: #dcdcdc;
}

.tools button.active {
    background: #333;
    border-radius: 1px;
}

.tools button::after {
    content: "";
    position: absolute;
    right: 1px;
    bottom: 2px;
    border: 1px solid transparent;
    border-right-color: #ccc;
    border-bottom-color: #ccc;
}

.tools button.single::after {
    display: none;
}

.swatch-tools {
    display: flex;
    justify-content: space-between;
    align-items: center;
    padding: 3px 4px 2px 3px;
}

.mini-swatches {
    width: 5px;
    height: 5px;
    border: 1px solid #111;
    border-right-color: #fff;
    border-bottom-color: #fff;
    background: linear-gradient(135deg, #111 50%, #fff 50%);
}

.swatches {
    width: 16px;
    height: 16px;
    flex: none;
    border: 1px solid transparent;
    background:
        linear-gradient(#92cccf, #92cccf) 0 0 / 9px 9px no-repeat,
        linear-gradient(#d0d0d0, #d0d0d0) 0 0 / 10px 10px no-repeat,
        linear-gradient(#fff, #fff) 100% 100% / 9px 9px no-repeat;
}

.toolbar .swatches {
    margin-left: 2px;
}

.modes {
    display: flex;
    flex-direction: column;
    align-items: center;
    gap: 5px;
    padding-top: 6px;
    color: #ccc;
}

/* Document */
.document {
    flex: 1;
    min-width: 0;
    display: flex;
    flex-direction: column;
    margin-left: -1px;
}

.doc-tabs {
    height: 16px;
    flex: none;
    display: flex;
    background: #424242;
}

.doc-tab {
    display: flex;
    align-items: center;
    gap: 4px;
    padding: 0 5px;
    font-family: "Noto Sans", sans-serif;
    font-weight: 700;
    color: #a0a0a0;
}

.doc-tab span {
    font-size: 8px;
    color: #ccc;
}

.doc-tab.active {
    color: #f2f2f2;
    background: #535353;
}

.doc-view {
    flex: 1;
    min-height: 0;
    display: grid;
    grid-template-columns: 11px 1fr 8px;
    grid-template-rows: 11px 1fr;
    background: #4a4a4a;
}

.ruler-corner {
    border: 1px dotted #5e5e5e;
    border-width: 0 1px 1px 0;
}

.ruler-h,
.ruler-v {
    overflow: hidden;
    position: relative;
    min-width: 0;
    min-height: 0;
    font-size: 5px;
    color: #a6a6a6;
}

.ruler-h {
    margin-left: -3px;
    background: repeating-linear-gradient(to right, #6a6a6a 0 1px, transparent 1px 4px) 0 100% / 100% 2px no-repeat;
}

.ruler-h .ticks {
    display: grid;
    grid-auto-flow: column;
    grid-auto-columns: 1fr;
    height: 11px;
    margin-right: -7px;
}

.ruler-h span {
    min-width: 0;
    padding: 2px 0 0 2px;
    line-height: 8px;
    border-left: 1px solid #686868;
}

.ruler-v {
    background: repeating-linear-gradient(#6a6a6a 0 1px, transparent 1px 4px) 100% 0 / 2px 100% no-repeat;
}

.ruler-v .ticks {
    display: grid;
    grid-auto-rows: 1fr;
    height: 462px;
    margin-top: 3px;
}

.ruler-v span {
    min-height: 0;
    padding: 0 4px;
    line-height: 4px;
    word-break: break-all;
    text-align: center;
    border-top: 1px solid #686868;
}

.mark {
    position: absolute;
    background: #ddd;
}

.ruler-h .mark {
    left: 52%;
    top: 1px;
    width: 1px;
    height: 6px;
}

.ruler-v .mark {
    top: 41%;
    left: 4px;
    width: 6px;
    height: 1px;
}

.canvas {
    display: flex;
    align-items: center;
    justify-content: center;
    min-height: 0;
    padding: 0 2px 2px 0;
    overflow: hidden;
    background: #2c2c2c;
}

.artboard {
    width: 384px;
    aspect-ratio: 1;
    background: #80bcbd;
    box-shadow: 0 1px 2px rgba(0, 0, 0, 0.6);
}

.scroll-v {
    display: flex;
    justify-content: center;
    padding-top: 135px;
}

.scroll-v i {
    width: 5px;
    height: 181px;
    border-radius: 3px;
    background: #686868;
}

.doc-status {
    height: 9px;
    flex: none;
    display: flex;
    align-items: center;
    line-height: 9px;
    background: #4f4f4f;
}

.doc-status .zoom {
    width: 32px;
    padding-left: 6px;
    color: #fff;
    background: #454545;
}

.doc-status .info {
    width: 92px;
    padding-left: 9px;
}

.scroll-h {
    flex: 1;
    padding-left: 199px;
}

.scroll-h i {
    display: block;
    width: 292px;
    height: 5px;
    border-radius: 3px;
    background: #686868;
}

/* Collapsed panel strip */
.strip {
    width: 19px;
    flex: none;
    display: flex;
    flex-direction: column;
}

.strip-group {
    display: flex;
    flex-direction: column;
    align-items: center;
    padding-bottom: 5px;
    margin-bottom: 1px;
    color: #e2e2e2;
    background: #535353;
}

.strip-group .icon + .icon {
    margin-top: 6px;
}

.strip-rest {
    flex: 1;
    background: #535353;
}

/* Panels */
.panels {
    width: 152px;
    flex: none;
    display: flex;
    flex-direction: column;
    background: #424242;
}

.panel {
    background: #535353;
    display: flex;
    flex-direction: column;
    margin-bottom: 2px;
}

.panel-tabs {
    height: 15px;
    flex: none;
    display: flex;
    align-items: stretch;
    background: #424242;
    font-weight: 700;
}

.panel-tabs button {
    padding: 0 5px;
    color: #a8a8a8;
    border-right: 1px solid #3b3b3b;
}

.panel-tabs button.active {
    padding-left: 4px;
    color: #fff;
    background: #535353;
}

.burger {
    width: 6px;
    height: 6px;
    margin: auto 3px auto auto;
}

.color-body {
    display: flex;
    padding: 4px 9px 9px 4px;
}

.spectrum {
    flex: 1;
    height: 134px;
    margin: 0 9px 0 4px;
    position: relative;
    background: linear-gradient(to top, #000, transparent), linear-gradient(to right, #fff, #25f7fa);
}

.spectrum i {
    position: absolute;
    left: 22%;
    top: 16%;
    width: 7px;
    height: 7px;
    border: 1px solid #222;
    border-radius: 50%;
}

.hue {
    width: 10px;
    height: 134px;
    position: relative;
    background: linear-gradient(#f00, #f0f 17%, #00f 33%, #0ff 50%, #0f0 67%, #ff0 83%, #f00);
}

.hue i {
    position: absolute;
    left: -5px;
    top: 46%;
    border: 3px solid transparent;
    border-left: 4px solid #eee;
    border-right: none;
}

.layer-kind {
    height: 19px;
    display: flex;
    align-items: center;
    gap: 3px;
    padding-left: 5px;
    border-bottom: 1px solid #454545;
}

.dark-box {
    width: 12px;
    height: 12px;
    display: flex;
    align-items: center;
    justify-content: center;
    background: #333;
    border-radius: 1px;
}

.props-scroll {
    display: flex;
    height: 129px;
}

.props-main {
    flex: 1;
}

.props-section {
    padding: 4px 5px 0;
    height: 61px;
    border-bottom: 1px solid #454545;
}

.props-section h2 {
    display: flex;
    align-items: center;
    gap: 3px;
    font-weight: 700;
    color: #f0f0f0;
}

.transform-grid {
    display: grid;
    grid-template-columns: 12px 6px 32px 6px 32px;
    grid-auto-rows: 8px;
    gap: 5px 4px;
    margin-top: 4px;
    align-items: center;
}

.transform-grid .link {
    grid-row: span 2;
    color: #ddd;
}

.transform-grid label {
    text-align: right;
    color: #b5b5b5;
}

.transform-grid input,
.combo input {
    width: 100%;
    min-width: 0;
    height: 8px;
    padding-left: 1px;
    background: #424242;
    color: #eee;
}

.angle-row {
    display: flex;
    align-items: center;
    gap: 3px;
    padding-left: 15px;
    margin-top: 7px;
}

.angle-row .icon {
    width: 8px;
    height: 8px;
    color: #ccc;
}

.angle-row > .icon {
    margin-left: 8px;
}

.angle-row > .icon:first-of-type {
    margin-left: 12px;
}

.combo {
    display: flex;
    gap: 1px;
}

.combo input {
    width: 23px;
}

.combo button {
    width: 7px;
    height: 8px;
    display: flex;
    align-items: center;
    justify-content: center;
    background: #424242;
}

.props-section.align {
    border-bottom: none;
}

.align p {
    margin: 3px 0 7px;
}

.align-icons {
    display: flex;
    gap: 7px;
    padding-left: 2px;
    color: #9a9a9a;
}

.align-icons .icon {
    width: 8px;
    height: 8px;
}

.align-icons .gap {
    margin-left: 10px;
}

.align-more {
    margin: 9px 0 0 91px;
    width: 8px;
    height: 8px;
}

.props-bar {
    width: 9px;
    height: 115px;
    background: #474747;
    display: flex;
    justify-content: center;
}

.props-bar i {
    width: 5px;
    height: 70px;
    margin-top: 1px;
    border-radius: 3px;
    background: #6f6f6f;
}

.layers-panel {
    flex: 1;
    min-height: 0;
    margin-bottom: 0;
}

.layer-row {
    height: 15px;
    flex: none;
    display: flex;
    align-items: center;
    gap: 2px;
    padding-left: 2px;
    border-bottom: 1px solid #464646;
}

.filter-row {
    height: 17px;
    padding-top: 2px;
}

.layer-row .select {
    height: 9px;
}

.layer-row .icon {
    width: 7px;
    height: 7px;
}

.kind {
    width: 46px;
    gap: 2px;
}

.blend {
    width: 68px;
}

.filter-icons,
.lock-icons {
    display: flex;
    gap: 6px;
    padding: 0 3px 0 4px;
}

.lock-icons {
    gap: 5px;
    padding: 0 9px 0 2px;
}

.toggle {
    width: 5px;
    height: 5px;
    margin-bottom: 4px;
    border-radius: 50%;
    background: #eee;
    box-shadow: 0 4px 0 #3a3a3a;
}

.layer-row .combo input {
    width: 17px;
}

.layer-area {
    flex: 1;
    min-height: 0;
    padding-right: 9px;
    background: #4b4b4b;
}

.layer-list li {
    height: 22px;
    display: flex;
    align-items: center;
    gap: 4px;
    padding-right: 8px;
    background: #535353;
    border-bottom: 1px solid #464646;
}

.layer-list .selected {
    background: #6a6a6a;
}

.eye {
    align-self: stretch;
    width: 17px;
    margin-right: -3px;
    display: flex;
    align-items: center;
    justify-content: center;
    background: #535353;
    border-right: 1px solid #464646;
}

.layer-list .icon {
    width: 7px;
    height: 7px;
}

.layer-list .adj {
    width: 9px;
    height: 9px;
    margin-left: 4px;
}

.layer-list .linked {
    width: 4px;
}

.thumb {
    width: 17px;
    height: 17px;
    flex: none;
    background: #fff;
    border: 1px solid #444;
}

.thumb.teal {
    position: relative;
    background: #92cccf;
}

/* Corner brackets round the selected thumbnail */
.thumb.teal::before {
    content: "";
    position: absolute;
    inset: -2px;
    border: 1px solid #eee;
    mask: linear-gradient(to right, #000 5px, transparent 5px calc(100% - 5px), #000 calc(100% - 5px)),
        linear-gradient(#000 5px, transparent 5px calc(100% - 5px), #000 calc(100% - 5px));
    mask-composite: intersect;
}

.layer-list .locked {
    margin-left: auto;
}

.layer-actions {
    height: 14px;
    flex: none;
    display: flex;
    align-items: center;
    justify-content: flex-end;
    gap: 7px;
    padding: 0 15px 1px 0;
    border-top: 1px solid #464646;
}

.layer-actions .icon {
    width: 7px;
    height: 7px;
}

.layer-actions .off {
    color: #8a8a8a;
}

.fx {
    width: 8px;
    font-size: 8px;
    font-style: italic;
}

/* Desktop and dock */
.desktop {
    height: 34px;
    flex: none;
    display: flex;
    justify-content: center;
    align-items: flex-start;
    position: relative;
    background:
        linear-gradient(rgba(10, 14, 25, 0.9), rgba(10, 14, 25, 0) 40%),
        linear-gradient(to right, #4c5978, #5c6685 15%, #757997 25%, #5f6887 70%, #46506f 88%, #3c4763);
}

.back-window {
    position: absolute;
    right: 118px;
    top: 0;
    width: 200px;
    height: 26px;
    background: #101a24;
    border-radius: 0 0 3px 0;
    border: 1px solid #28323d;
    border-top: none;
}

.file-row {
    display: flex;
    justify-content: flex-end;
    gap: 14px;
    height: 10px;
    padding: 1px 5px 0;
    overflow: hidden;
    font-family: Inter, sans-serif;
    font-size: 7px;
    color: #b5b5b5;
    background: #1e1e1e;
    border-bottom: 1px solid #3a4048;
}

.dock {
    position: relative;
    height: 31px;
    display: flex;
    gap: 5px;
    padding: 5px 6px 0 4px;
    border-radius: 7px;
    background: linear-gradient(to right, #505769, #3c4a47 28%, #33442c 42%, #2a372e 50%, #222a32 58%, #1e252d);
    box-shadow: inset 0 0 0 1px rgba(255, 255, 255, 0.08);
}

.tile {
    width: 21px;
    height: 21px;
    display: flex;
    align-items: center;
    justify-content: center;
    position: relative;
    border-radius: 5px;
    font-family: "Open Sans", sans-serif;
    font-size: 12px;
    font-weight: 600;
    line-height: 21px;
    text-decoration: none;
}

.tile svg {
    width: 21px;
    height: 21px;
    overflow: visible;
}

.tile.running::after {
    content: "";
    position: absolute;
    bottom: -4px;
    left: 9px;
    width: 2px;
    height: 2px;
    border-radius: 50%;
    background: #cfd3d8;
}

.word b {
    position: absolute;
    left: 3px;
    font-size: 7px;
    color: #fff;
}

.ps {
    color: #31a8ff;
    background: #001e36;
}

.ai {
    color: #ff9a00;
    background: #330000;
}

.ae,
.pr,
.me {
    color: #9999ff;
    background: #00005b;
}

.divider {
    width: 1px;
    height: 22px;
    margin: 0 3px;
    background: #434b53;
}

/* Export dialog */
.dialog {
    position: absolute;
    top: 201px;
    left: 50%;
    width: 276px;
    transform: translateX(-50%);
    overflow: hidden;
    font-family: Inter, sans-serif;
    font-size: 7px;
    line-height: 10px;
    color: #e6e6e6;
    background: #535353;
    border: 1px solid #6c6c6c;
    border-radius: 6px;
    box-shadow: 0 0 1px #111, 0 9px 18px rgba(0, 0, 0, 0.55);
}

.dialog-title {
    height: 15px;
    line-height: 14px;
    text-align: center;
    font-weight: 600;
    color: #cfcfcf;
    background: #393939;
    border-bottom: 1px solid #2e2e2e;
}

.dialog-body {
    display: flex;
    gap: 10px;
    padding: 7px 10px 7px 8px;
}

.dialog-main {
    flex: 1;
}

.row {
    display: flex;
    align-items: center;
}

.row input[type="text"] {
    height: 12px;
    padding: 0 2px;
    background: #454545;
    border: 1px solid #5c5c5c;
}

.caret-field {
    flex: 1;
    display: flex;
    position: relative;
    margin-left: 6px;
}

.caret-field input {
    flex: 1;
    min-width: 0;
}

.row .caret-field input {
    border-color: #2f6fc0;
}

.caret {
    position: absolute;
    left: 6px;
    top: 2px;
    width: 1px;
    height: 8px;
    background: #ddd;
}

.focus-row {
    height: 13px;
}

.copy-row {
    margin-top: 6px;
    padding-right: 5px;
}

.copy-row input {
    flex: 1;
    min-width: 0;
    margin-left: 6px;
}

.dialog-main > .check {
    margin: 4px 0;
}

.dialog .check {
    font-weight: 500;
}

fieldset {
    margin: 0;
    padding: 0 8px;
    border: 1px solid #484848;
}

legend {
    padding: 0 2px;
    margin-left: -3px;
    line-height: 9px;
    font-weight: 500;
}

.quality {
    height: 41px;
    padding-top: 4px;
}

.quality .row input {
    width: 21px;
    margin: 0 5px 0 7px;
    text-align: right;
}

.quality .select {
    width: 52px;
    padding: 0 3px 0 2px;
    font-weight: 500;
}

.quality input[type="range"] {
    display: block;
    width: 100%;
    height: 8px;
    margin-top: 5px;
    background: linear-gradient(#757575, #757575) 0 50% / 100% 2px no-repeat;
}

.quality input[type="range"]::-webkit-slider-thumb {
    appearance: none;
    width: 6px;
    height: 5px;
    background: #fff;
    clip-path: polygon(50% 0, 100% 60%, 100% 100%, 0 100%, 0 60%);
}

.formats {
    height: 69px;
    margin-top: 5px;
}

.formats .check {
    height: 10px;
    margin-top: 5px;
}

.formats legend + .check {
    margin-top: 2px;
}

.dialog-buttons {
    width: 40px;
    display: flex;
    flex-direction: column;
    gap: 5px;
}

.dialog-buttons button {
    height: 14px;
    font-weight: 500;
    border: 1px solid #7d7d7d;
    border-radius: 7px;
}

.dialog-buttons .ok {
    border-color: #d6d6d6;
}
```
